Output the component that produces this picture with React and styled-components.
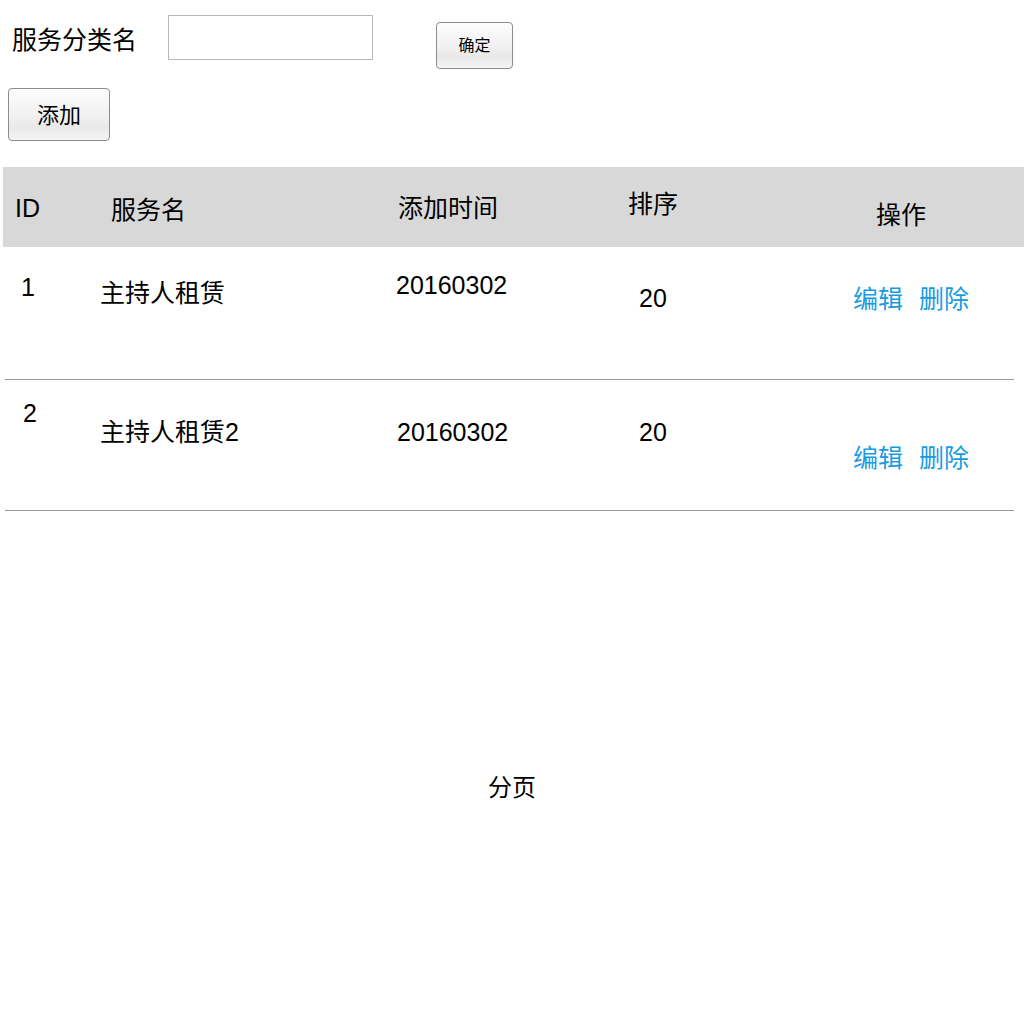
import React from 'react'
import styled, { createGlobalStyle } from 'styled-components'

const GlobalStyle = createGlobalStyle`
  body {
    margin: 0;
    background: #fff;
    color: #000;
    font-family: "Liberation Sans", "Noto Sans CJK SC", sans-serif;
  }
`

const Page = styled.div`
  width: 1024px;
`

const FormRow = styled.div`
  display: flex;
  align-items: flex-start;
  padding-left: 12px;
`

const Label = styled.span`
  margin-top: 28px;
  font-size: 25px;
  line-height: 25px;
`

const TextInput = styled.input`
  box-sizing: border-box;
  margin: 15px 0 0 31px;
  width: 205px;
  height: 45px;
  border: 1px solid #b8b8b8;
  outline: none;
`

const Button = styled.button`
  box-sizing: border-box;
  width: ${p => p.$w}px;
  height: ${p => p.$h}px;
  font-family: "Liberation Sans", "Noto Sans CJK SC", sans-serif;
  font-size: ${p => p.$size}px;
  color: #000;
  border: 1px solid #8c8c8c;
  border-radius: 4px;
  background: linear-gradient(#fdfdfd, #f0f0f0 55%, #e9e9e9 75%, #f4f4f4);
  padding: 0 0 ${p => p.$lift}px;
`

const ConfirmButton = styled(Button)`
  margin: 22px 0 0 63px;
`

const AddButton = styled(Button)`
  display: block;
  margin: 19px 0 0 8px;
`

const Table = styled.div`
  margin-top: 26px;
  margin-left: 3px;
`

const Row = styled.div`
  display: grid;
  grid-template-columns: 90px 290px 220px 200px 1fr;
  height: ${p => p.$h}px;
  font-size: 25px;
  line-height: 24px;
`

const HeadRow = styled(Row)`
  background: #d8d8d8;
`

const BodyRow = styled(Row)`
  margin: 0 10px 0 2px;
  border-bottom: 1px solid #999;
`

const Cell = styled.div`
  padding-top: ${p => p.$top}px;
  padding-left: ${p => p.$left}px;
  white-space: nowrap;
`

const Actions = styled(Cell)`
  display: flex;
  gap: 16px;
  color: #199be2;
`

const Pager = styled.div`
  margin-top: 265px;
  text-align: center;
  font-size: 24px;
  line-height: 24px;
`

const rows = [
  {
    h: 132,
    id: '1', name: '主持人租赁', date: '20160302', sort: '20',
    tops: [28, 34, 26, 39, 40],
    lefts: [16, 5, 11, 34, 48],
  },
  {
    h: 130,
    id: '2', name: '主持人租赁2', date: '20160302', sort: '20',
    tops: [21, 40, 40, 40, 66],
    lefts: [18, 5, 12, 34, 48],
  },
]

export default function App() {
  return (
    <Page>
      <GlobalStyle />
      <FormRow>
        <Label>服务分类名</Label>
        <TextInput />
        <ConfirmButton $w={77} $h={47} $size={16} $lift={4}>确定</ConfirmButton>
      </FormRow>
      <AddButton $w={102} $h={53} $size={22} $lift={3}>添加</AddButton>

      <Table>
        <HeadRow $h={80}>
          <Cell $top={29} $left={12}>ID</Cell>
          <Cell $top={31} $left={18}>服务名</Cell>
          <Cell $top={29} $left={15}>添加时间</Cell>
          <Cell $top={25} $left={25}>排序</Cell>
          <Cell $top={36} $left={73}>操作</Cell>
        </HeadRow>
        {rows.map(r => (
          <BodyRow key={r.id} $h={r.h}>
            <Cell $top={r.tops[0]} $left={r.lefts[0]}>{r.id}</Cell>
            <Cell $top={r.tops[1]} $left={r.lefts[1]}>{r.name}</Cell>
            <Cell $top={r.tops[2]} $left={r.lefts[2]}>{r.date}</Cell>
            <Cell $top={r.tops[3]} $left={r.lefts[3]}>{r.sort}</Cell>
            <Actions $top={r.tops[4]} $left={r.lefts[4]}>
              <span>编辑</span>
              <span>删除</span>
            </Actions>
          </BodyRow>
        ))}
      </Table>

      <Pager>分页</Pager>
    </Page>
  )
}
